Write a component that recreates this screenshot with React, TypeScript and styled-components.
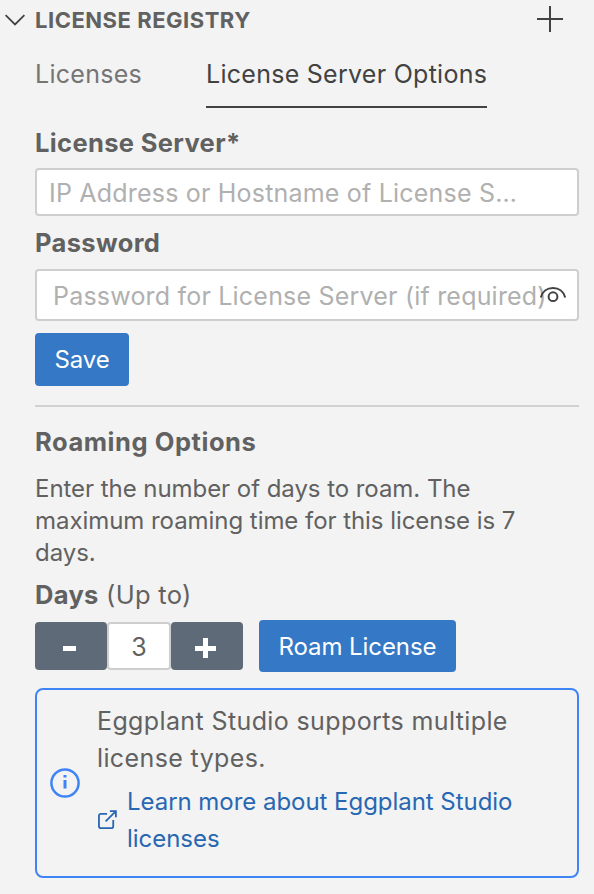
import React, { useState } from "react";
import styled, { createGlobalStyle } from "styled-components";

const GlobalStyle = createGlobalStyle`
  * { box-sizing: border-box; }
  body {
    margin: 0;
    background: #f3f3f3;
    font-family: Inter, "Liberation Sans", sans-serif;
    color: #616161;
  }
  button, input { font-family: inherit; }
`;

const Panel = styled.main`
  width: 594px;
  height: 894px;
  overflow: hidden;
  background: #f3f3f3;
`;

const Header = styled.header`
  display: flex;
  align-items: center;
  height: 40px;
  padding: 0 30px 0 4px;
`;

const Title = styled.h1`
  flex: 1;
  margin: 0 0 0 9px;
  font-size: 22px;
  line-height: 40px;
  font-weight: 700;
  letter-spacing: 0.52px;
`;

const IconButton = styled.button`
  display: flex;
  padding: 0;
  border: 0;
  background: none;
  color: #424242;
`;

const AddButton = styled(IconButton)`
  margin-top: -2px;
`;

const Content = styled.div`
  display: flex;
  flex-direction: column;
  padding: 0 15px 0 35px;
`;

const Tabs = styled.nav`
  display: flex;
  gap: 64px;
  height: 68px;
`;

const Tab = styled.button<{ $active?: boolean; $width: number }>`
  width: ${(p) => p.$width}px;
  padding: 2px 0 0;
  border: 0;
  border-bottom: 2px solid ${(p) => (p.$active ? "#424242" : "transparent")};
  background: none;
  text-align: left;
  white-space: nowrap;
  font-size: 25px;
  letter-spacing: 0.27px;
  color: ${(p) => (p.$active ? "#424242" : "#757575")};
`;

const Label = styled.label<{ $top: number; $bottom: number }>`
  margin: ${(p) => p.$top}px 0 ${(p) => p.$bottom}px;
  line-height: 36px;
  font-size: 25.5px;
  font-weight: 700;
  letter-spacing: 0.35px;
`;

const Field = styled.div<{ $height: number; $pad: number }>`
  display: flex;
  align-items: center;
  position: relative;
  height: ${(p) => p.$height}px;
  padding: 2px 0 0 ${(p) => p.$pad}px;
  border: 2px solid #cecece;
  border-radius: 4px;
  background: #fff;
`;

const Input = styled.input<{ $width: number }>`
  width: ${(p) => p.$width}px;
  height: 100%;
  padding: 0;
  border: 0;
  outline: 0;
  background: none;
  font-size: 25px;
  letter-spacing: 0.2px;
  text-overflow: ellipsis;
  color: #616161;
  &::placeholder { color: #b0b0b0; opacity: 1; }
`;

const Reveal = styled(IconButton)`
  position: absolute;
  right: 10px;
  top: 12px;
`;

const Primary = styled.button<{ $width: number; $height: number }>`
  width: ${(p) => p.$width}px;
  height: ${(p) => p.$height}px;
  padding: 0;
  border: 0;
  border-radius: 4px;
  background: #3478c6;
  color: #fff;
  font-size: 24px;
  letter-spacing: -0.08px;
  white-space: nowrap;
`;

const Actions = styled.div`
  display: flex;
  margin-top: 12px;
`;

const Divider = styled.hr`
  width: 100%;
  height: 2px;
  margin: 19px 0 0;
  border: 0;
  background: #d1d1d1;
`;

const SectionTitle = styled.h2`
  margin: 17px 0 0;
  font-size: 25.5px;
  line-height: 36px;
  font-weight: 700;
  letter-spacing: 0.55px;
`;

const Paragraph = styled.p`
  margin: 13px 0 0;
  font-size: 24px;
  line-height: 32px;
  letter-spacing: -0.05px;
  white-space: nowrap;
`;

const DaysLabel = styled.div`
  margin-top: 8px;
  font-size: 25.5px;
  line-height: 36px;
  letter-spacing: 0.3px;
`;

const RoamRow = styled.div`
  display: flex;
  align-items: center;
  height: 52px;
  margin-top: 7px;
`;

const StepButton = styled.button`
  display: flex;
  align-items: center;
  justify-content: center;
  width: 72px;
  height: 48px;
  padding: 0;
  border: 0;
  border-radius: 4px;
  background: #5f6a79;
  color: #fff;
`;

const DayCount = styled.input`
  width: 64px;
  height: 48px;
  padding: 2px 0 0;
  border: 2px solid #cecece;
  border-radius: 4px;
  background: #fff;
  color: #616161;
  font-size: 25px;
  text-align: center;
`;

const RoamButton = styled(Primary)`
  margin-left: 16px;
`;

const InfoBox = styled.aside`
  display: flex;
  align-items: center;
  height: 190px;
  margin-top: 16px;
  padding-left: 13px;
  border: 2px solid #3f84f6;
  border-radius: 8px;
`;

const InfoText = styled.div`
  display: flex;
  flex-direction: column;
  gap: 6px;
  margin: -6px 0 0 17px;
  font-size: 25px;
  line-height: 37px;
  letter-spacing: 0.38px;
  white-space: nowrap;
`;

const LearnMore = styled.a`
  display: flex;
  align-items: center;
  gap: 9px;
  padding-left: 1px;
  color: #2867b2;
  font-size: 24px;
  letter-spacing: -0.04px;
  text-decoration: none;
`;

export default function App() {
  const [days, setDays] = useState(3);
  return (
    <Panel>
      <GlobalStyle />
      <Header>
        <svg width="22" height="22" viewBox="0 0 22 22" fill="none" stroke="#424242" strokeWidth="1.8">
          <path d="M1.6 6.2 11 15.4 20.4 6.2" />
        </svg>
        <Title>LICENSE REGISTRY</Title>
        <AddButton aria-label="Add license">
          <svg width="28" height="28" viewBox="0 0 28 28" stroke="currentColor" strokeWidth="2">
            <path d="M1 14H27M14 1V27" />
          </svg>
        </AddButton>
      </Header>
      <Content>
        <Tabs>
          <Tab $width={107}>Licenses</Tab>
          <Tab $active $width={281}>License Server Options</Tab>
        </Tabs>
        <Label $top={17} $bottom={7}>License Server*</Label>
        <Field $height={48} $pad={12}>
          <Input $width={470} placeholder="IP Address or Hostname of License Server" />
        </Field>
        <Label $top={9} $bottom={8}>Password</Label>
        <Field $height={52} $pad={16}>
          <Input $width={510} placeholder="Password for License Server (if required)" />
          <Reveal aria-label="Show password">
            <svg width="28" height="24" viewBox="0 0 28 24" fill="none" stroke="currentColor" strokeWidth="2">
              <path d="M1.8 14.5C3.2 8.5 8 5 14 5S24.8 8.5 26.2 14.5" />
              <circle cx="14" cy="13.7" r="4.4" />
            </svg>
          </Reveal>
        </Field>
        <Actions>
          <Primary $width={94} $height={53}>Save</Primary>
        </Actions>
        <Divider />
        <SectionTitle>Roaming Options</SectionTitle>
        <Paragraph>
          Enter the number of days to roam. The<br />
          maximum roaming time for this license is 7<br />
          days.
        </Paragraph>
        <DaysLabel><b>Days</b> (Up to)</DaysLabel>
        <RoamRow>
          <StepButton aria-label="Fewer days" onClick={() => setDays(days - 1)}>
            <svg width="24" height="24" viewBox="0 0 24 24" fill="currentColor"><path d="M4 12h13v5H4z" /></svg>
          </StepButton>
          <DayCount value={days} readOnly />
          <StepButton aria-label="More days" onClick={() => setDays(days + 1)}>
            <svg width="24" height="24" viewBox="0 0 24 24" fill="currentColor"><path d="M0 12h21v5H0zM8 4h5v20H8z" /></svg>
          </StepButton>
          <RoamButton $width={197} $height={52}>Roam License</RoamButton>
        </RoamRow>
        <InfoBox>
          <svg width="30" height="30" viewBox="0 0 30 30" fill="none" stroke="#3f84f6">
            <circle cx="15" cy="15" r="13.6" strokeWidth="2.5" />
            <path d="M15 12v8.5M15 7v2.6" strokeWidth="3" />
          </svg>
          <InfoText>
            <div>Eggplant Studio supports multiple<br />license types.</div>
            <LearnMore href="#">
              <svg width="20" height="20" viewBox="0 0 21 21" fill="none" stroke="currentColor" strokeWidth="1.9">
                <path d="M9.5 4H3a2 2 0 0 0-2 2v11a2 2 0 0 0 2 2h11a2 2 0 0 0 2-2v-6.5M12.5 1.2h6.3V7.5M18.8 1.2 8 12" />
              </svg>
              <span>Learn more about Eggplant Studio<br />licenses</span>
            </LearnMore>
          </InfoText>
        </InfoBox>
      </Content>
    </Panel>
  );
}
